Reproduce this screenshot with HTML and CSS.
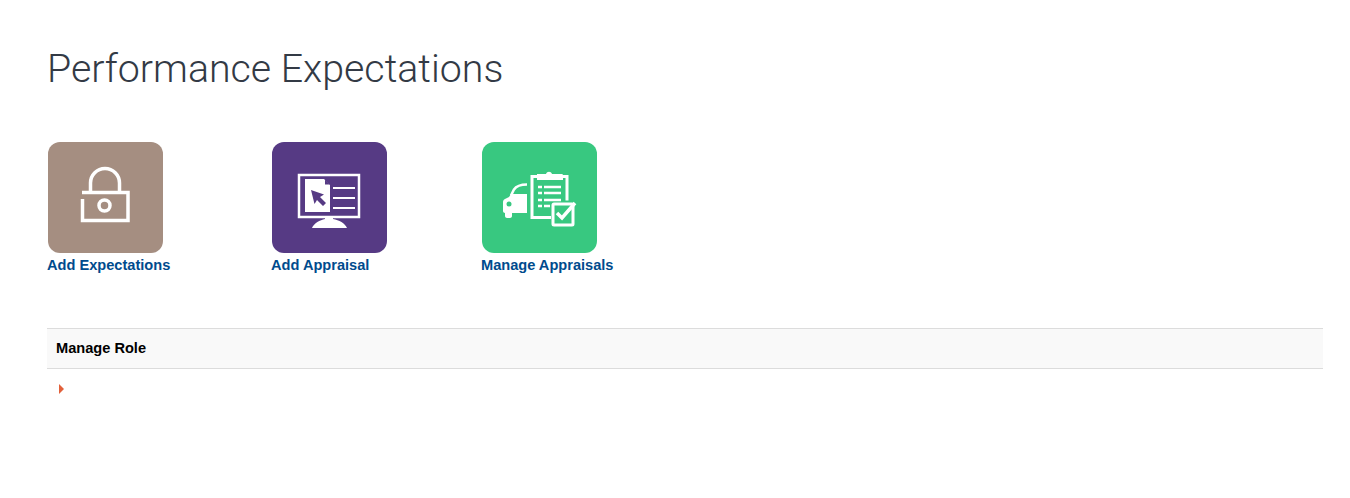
FILE: index.html
```html
<!DOCTYPE html>
<html lang="en">
<head>
  <meta charset="UTF-8" />
  <title>Performance Expectations</title>
  <link rel="stylesheet" href="styles.css">
</head>
<body>
  <h1>Performance Expectations</h1>

  <div class="tiles">
    <a class="tile" href="#">
      <span class="tile-icon lock">
        <svg viewBox="0 0 115 111" width="115" height="111" fill="none" stroke="#fff" stroke-width="3.500">
          <path d="M34 50.500h46v28H34.500V57"/>
          <path d="M42.500 50V41a14.500 14.500 0 0 1 29 0v9"/>
          <circle cx="56.500" cy="63.500" r="5.500"/>
        </svg>
      </span>
      <span class="tile-label">Add Expectations</span>
    </a>
    <a class="tile" href="#">
      <span class="tile-icon monitor">
        <svg viewBox="0 0 115 111" width="115" height="111" fill="none" stroke="#fff">
          <rect x="27" y="33" width="60" height="42" stroke-width="2.500"/>
          <path d="M33 37h19l6 6v27H33z" fill="#fff" stroke="none"/>
          <path d="M53 37.500v5h5z" fill="#563a84" stroke="none"/>
          <path d="M39 48l13 4.500-4 2.500 6 6-3 3-6-6-2.500 4z" fill="#563a84" stroke="none"/>
          <path d="M61 46h22M61 56h22M61 66h22" stroke-width="2"/>
          <path d="M53 75h8v2c6 1 12 4 14 9H40c2-5 8-8 13-9z" fill="#fff" stroke="none"/>
        </svg>
      </span>
      <span class="tile-label">Add Appraisal</span>
    </a>
    <a class="tile" href="#">
      <span class="tile-icon clipboard">
        <svg viewBox="0 0 115 111" width="115" height="111" fill="none" stroke="#fff">
          <path d="M45 42.500c-7 0-11 2-13 5l-3 6" stroke-width="2.500"/>
          <path d="M45 52H29l-2 3-4 2c-2 1-2 2-2 4v8c0 1 1 2 2 2v3c0 1 1 2 2 2h3c1 0 2-1 2-2v-3h15z" fill="#fff" stroke="none"/>
          <circle cx="27" cy="62" r="2.500" fill="#38c880" stroke="none"/>
          <path d="M55 34.500h-5v41h19M81 34.500h4v24" stroke-width="3"/>
          <path d="M55 32h9c1-3 5-3 6 0h10c1 0 1 1 1 2v4H55z" fill="#fff" stroke="none"/>
          <path d="M56 45h4M62 45h17M56 51h4M62 51h17M56 58h4M62 58h17M56 64h4M62 64h6" stroke-width="2.500"/>
          <rect x="71" y="62" width="20" height="21" rx="1" stroke-width="3" fill="#38c880"/>
          <path d="M75 71l5 5 13-15" stroke-width="3.500"/>
        </svg>
      </span>
      <span class="tile-label">Manage Appraisals</span>
    </a>
  </div>

  <section class="panel">
    <div class="panel-head">Manage Role</div>
    <div class="panel-body"><span class="caret"></span></div>
  </section>
</body>
</html>
```

FILE: styles.css
```css
body {
  margin: 0;
  padding: 0 27px 0 47px;
  background: #fff;
  font-family: "Liberation Sans", Arial, sans-serif;
}

h1 {
  margin: 0;
  padding-top: 46px;
  height: 142px;
  box-sizing: border-box;
  font-family: Roboto, sans-serif;
  font-weight: 300;
  font-size: 39.300px;
  line-height: 46px;
  color: #333a45;
}

.tiles {
  display: grid;
  grid-template-columns: 224px 210px auto;
  height: 186px;
}

.tile {
  display: flex;
  flex-direction: column;
  align-items: flex-start;
  text-decoration: none;
}

.tile-icon {
  display: block;
  width: 115px;
  height: 111px;
  margin-left: 1px;
  border-radius: 12px;
}

.tile-icon svg {
  display: block;
}

.lock { background: #a58e81; }
.monitor { background: #563a84; }
.clipboard { background: #38c880; }

.tile-label {
  margin-top: 4px;
  font-size: 14.600px;
  line-height: 16px;
  font-weight: bold;
  color: #004b8d;
}

.panel-head {
  height: 39px;
  padding-left: 9px;
  background: #f9f9f9;
  border-top: 1px solid #dcdcdc;
  border-bottom: 1px solid #dcdcdc;
  font-size: 14.600px;
  font-weight: bold;
  line-height: 39px;
  color: #000;
}

.panel-body {
  display: flex;
  padding: 15px 0 0 12px;
}

.caret {
  width: 0;
  height: 0;
  border-left: 5px solid #e2603a;
  border-top: 5px solid transparent;
  border-bottom: 5px solid transparent;
}
```
